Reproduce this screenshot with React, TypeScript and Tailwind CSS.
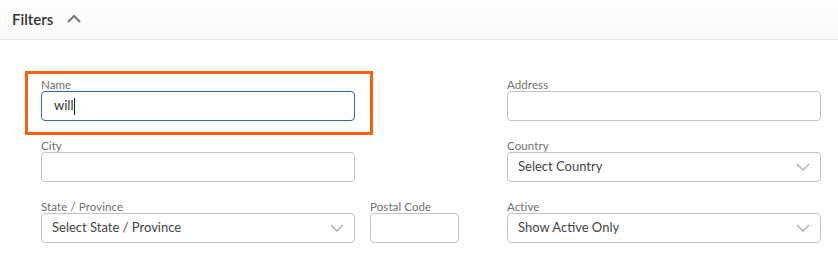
import { useState } from 'react';

function Chevron() {
  return (
    <svg width="14" height="8" viewBox="0 0 14 8" className="text-[#b3b3b3]">
      <path d="M1 1l6 6 6-6" fill="none" stroke="currentColor" strokeWidth="1.5" />
    </svg>
  );
}

function Field({ label, children, className = '' }: { label: string; children: React.ReactNode; className?: string }) {
  return (
    <div className={`flex flex-col ${className}`}>
      <label className="text-[11.5px] leading-[13px] text-[#707070] tracking-[0.1px]">{label}</label>
      {children}
    </div>
  );
}

function TextBox({ value = '', focused = false }: { value?: string; focused?: boolean }) {
  return (
    <div
      className={`h-[30px] rounded-[4px] border flex items-center px-3 text-[13px] text-[#333] ${
        focused ? 'border-[#2a65c7]' : 'border-[#c2c2c2]'
      }`}
    >
      {value}
      {focused && <span className="w-px h-[17px] bg-[#222] ml-[1px]" />}
    </div>
  );
}

function SelectBox({ placeholder }: { placeholder: string }) {
  return (
    <div className="h-[30px] rounded-[4px] border border-[#c2c2c2] flex items-center justify-between pl-[10px] pr-[10px] text-[13px] text-[#444]">
      <span>{placeholder}</span>
      <Chevron />
    </div>
  );
}

export default function App() {
  const [name] = useState('will');

  return (
    <div className="w-[838px] h-[273px] bg-white font-['Lato','Open_Sans',sans-serif]">
      {/* Header */}
      <div className="h-[40px] flex items-center gap-[14px] px-3 border-b border-[#e4e4e4] bg-gradient-to-b from-white to-[#f8f8f8]">
        <span className="text-[15px] font-semibold text-[#333]">Filters</span>
        <svg width="14" height="9" viewBox="0 0 14 9" className="text-[#777] mt-[-3px]">
          <path d="M1 8l6-6 6 6" fill="none" stroke="currentColor" strokeWidth="2" />
        </svg>
      </div>

      {/* Form */}
      <div className="flex pl-[41px] pt-[38px] gap-[48px]">
        <div className="w-[418px] flex flex-col gap-[18px]">
          <div className="relative w-[314px]">
            <div className="absolute -left-[16px] -right-[18px] -top-[7px] -bottom-[14px] border-[3px] border-[#fb5d13] pointer-events-none" />
            <Field label="Name">
              <TextBox value={name} focused />
            </Field>
          </div>
          <Field label="City" className="w-[314px]">
            <TextBox />
          </Field>
          <div className="flex gap-[15px]">
            <Field label="State / Province" className="w-[314px]">
              <SelectBox placeholder="Select State / Province" />
            </Field>
            <Field label="Postal Code" className="w-[89px]">
              <TextBox />
            </Field>
          </div>
        </div>

        <div className="w-[314px] flex flex-col gap-[18px]">
          <Field label="Address">
            <TextBox />
          </Field>
          <Field label="Country">
            <SelectBox placeholder="Select Country" />
          </Field>
          <Field label="Active">
            <SelectBox placeholder="Show Active Only" />
          </Field>
        </div>
      </div>
    </div>
  );
}
